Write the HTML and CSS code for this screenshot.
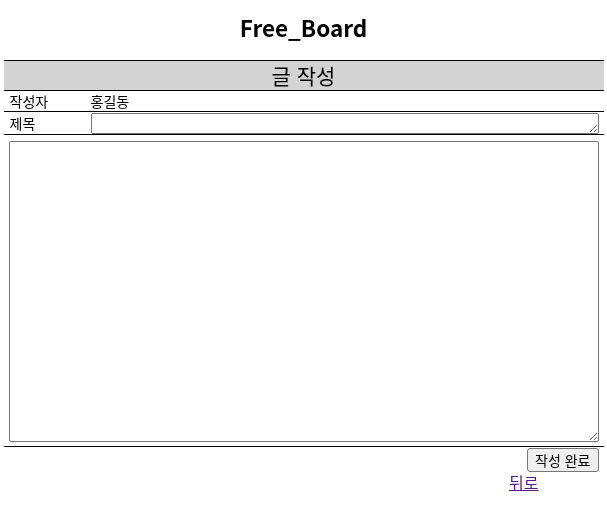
FILE: index.html
```html
<!DOCTYPE html>
<html lang="ko">
<head>
<meta charset="utf-8">
<title>Free_Board</title>
<link rel="stylesheet" href="styles.css">
</head>
<body>
<h2 class="page-title">Free_Board</h2>
<form class="write-form">
  <table class="write-table">
    <tr class="head-row"><th colspan="2">글 작성</th></tr>
    <tr class="info-row"><td class="label">작성자</td><td class="value">홍길동</td></tr>
    <tr class="title-row"><td class="label">제목</td><td class="value"><textarea class="title-input" rows="1"></textarea></td></tr>
    <tr class="content-row"><td colspan="2" class="content-cell"><textarea class="content-input"></textarea></td></tr>
  </table>
  <div class="actions"><button type="button" class="submit-btn">작성 완료</button></div>
  <div class="back"><a href="#" class="back-link">뒤로</a></div>
</form>
</body>
</html>
```

FILE: styles.css
```css
body {
  margin: 0;
  font-family: "Noto Sans CJK KR", "Noto Sans", sans-serif;
  color: #000;
  background: #fff;
}
.page-title {
  margin: 11px 0 0;
  height: 32px;
  line-height: 32px;
  font-size: 22.5px;
  font-weight: bold;
  text-align: center;
}
.write-form {
  width: 600px;
  margin: 17px auto 0;
}
.write-table {
  width: 600px;
  border-collapse: collapse;
  border-top: 1px solid #000;
}
.write-table tr {
  border-bottom: 1px solid #000;
}
.write-table td,
.write-table th {
  padding: 0;
}
.head-row th {
  height: 29px;
  background: #d3d3d3;
  font-size: 21px;
  font-weight: normal;
  line-height: 29px;
  text-align: center;
}
.label {
  width: 81px;
  padding-left: 6px !important;
  font-size: 14px;
}
.info-row td {
  height: 20px;
  line-height: 20px;
  font-size: 14px;
}
.title-row td {
  height: 22px;
  font-size: 14px;
}
.title-input {
  display: block;
  box-sizing: border-box;
  width: 508px;
  height: 21px;
  margin: 1px 0 0;
  border: 1px solid #767676;
  border-radius: 2px;
  padding: 1px 2px;
  font-family: inherit;
  font-size: 13px;
}
.content-cell {
  padding: 6px 5px 4px !important;
}
.content-input {
  display: block;
  box-sizing: border-box;
  width: 590px;
  height: 301px;
  margin: 0;
  border: 1px solid #767676;
  border-radius: 2px;
  font-family: inherit;
  font-size: 13px;
}
.actions {
  display: flex;
  justify-content: flex-end;
  padding: 1px 5px 0 0;
}
.submit-btn {
  box-sizing: border-box;
  height: 24px;
  padding: 0 7px;
  border: 1px solid #767676;
  border-radius: 3px;
  background: #efefef;
  font-family: inherit;
  font-size: 14px;
  color: #000;
}
.back {
  display: flex;
  justify-content: flex-end;
  padding: 1px 65px 0 0;
}
.back-link {
  font-size: 16px;
  line-height: 19px;
  color: #551a8b;
}
```
